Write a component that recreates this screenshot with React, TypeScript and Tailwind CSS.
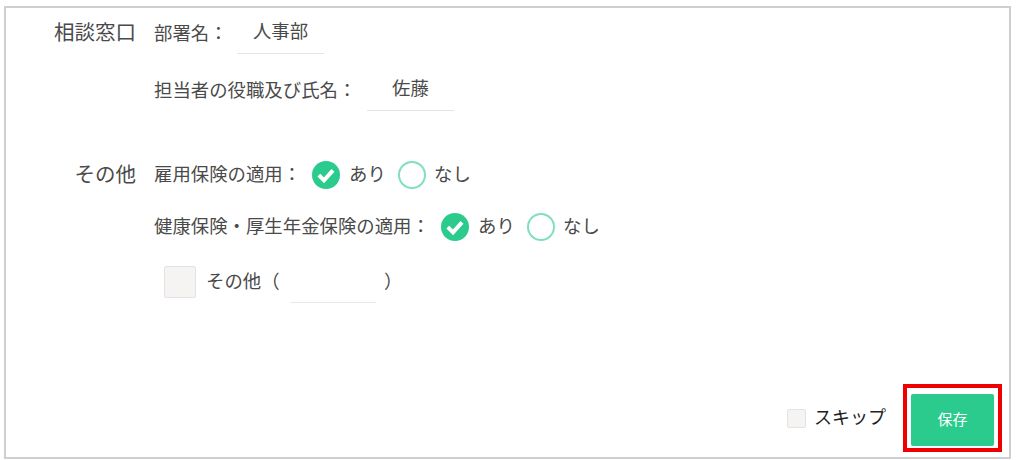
const font = "font-['Roboto','Noto_Sans_CJK_JP','Noto_Sans',sans-serif]";

function Checked() {
  return (
    <svg width="28" height="28" viewBox="0 0 28 28" className="shrink-0">
      <circle cx="14" cy="14" r="14" fill="#2bcb8e" />
      <path d="M6.8 14.2 L12 19.4 L21 9.4" fill="none" stroke="#fff" strokeWidth="4" />
    </svg>
  );
}

function Radio() {
  return <span className="block w-[28px] h-[28px] rounded-full border-2 border-[#7fe0bd] bg-white shrink-0" />;
}

function Choice({ label, labelW }: { label: string; labelW: string }) {
  return (
    <div className="flex items-center h-[28px] text-[18.4px] leading-[28px] text-[#4a4a4a]">
      <span className={`${labelW} whitespace-nowrap`}>{label}</span>
      <Checked />
      <span className="ml-[9px] w-[37px] whitespace-nowrap">あり</span>
      <span className="ml-[12px]"><Radio /></span>
      <span className="ml-[8px] whitespace-nowrap">なし</span>
    </div>
  );
}

export default function App() {
  return (
    <div className={`${font} w-[1019px] h-[460px] bg-white pt-[6px] pl-[4px] overflow-hidden`}>
      <div className="w-[1007px] h-[453px] border-2 border-[#cfcfcf] flex flex-col">
        <div className="flex">
          <div className="w-[130px] pt-[12px] flex flex-col items-end text-[20.5px] leading-[26px] text-[#4a4a4a]">
            <span>相談窓口</span>
            <span className="mt-[116px]">その他</span>
          </div>
          <div className="ml-[18px] flex flex-col">
            <div className="flex items-start h-[46px] text-[18.4px] text-[#4a4a4a]">
              <span className="w-[83px] pt-[13px] leading-[26px] whitespace-nowrap">部署名：</span>
              <span className="w-[87px] h-[46px] pt-[11px] leading-[26px] text-center border-b border-[#e3e3e8]">人事部</span>
            </div>
            <div className="flex items-start h-[57px] text-[18.4px] text-[#4a4a4a]">
              <span className="w-[213px] pt-[24px] leading-[26px] whitespace-nowrap">担当者の役職及び氏名：</span>
              <span className="w-[87px] h-[57px] pt-[22px] leading-[26px] text-center border-b border-[#e3e3e8]">佐藤</span>
            </div>
            <div className="mt-[50px] flex flex-col gap-[24px]">
              <Choice label="雇用保険の適用：" labelW="w-[158px]" />
              <Choice label="健康保険・厚生年金保険の適用：" labelW="w-[287px]" />
            </div>
            <div className="flex items-start mt-[23px] ml-[10px] h-[39px] text-[18.4px] text-[#4a4a4a]">
              <span className="block w-[32px] h-[32px] mt-[2px] rounded-[2px] border border-[#e4e2e2] bg-[#f6f3f3]" />
              <span className="ml-[10px] w-[84px] pt-[5px] leading-[26px] whitespace-nowrap">その他（</span>
              <span className="w-[86px] h-[39px] border-b border-[#e8e8ea]" />
              <span className="ml-[8px] pt-[5px] leading-[26px]">）</span>
            </div>
          </div>
        </div>
        <div className="mt-auto mb-[5px] mr-[7px] flex justify-end items-center">
          <span className="block w-[19px] h-[19px] rounded-[2px] border border-[#e4e2e2] bg-[#f6f3f3]" />
          <span className="ml-[8px] text-[18px] leading-[26px] text-[#222] whitespace-nowrap">スキップ</span>
          <div className="ml-[17px] border-4 border-[#ee0000] pt-[6px] pb-[1px] px-[4px]">
            <button className="block w-[83px] h-[52px] rounded-[2px] bg-[#2bcb8e] text-white text-[15px]">保存</button>
            <div className="h-[1px]" />
          </div>
        </div>
      </div>
    </div>
  );
}
